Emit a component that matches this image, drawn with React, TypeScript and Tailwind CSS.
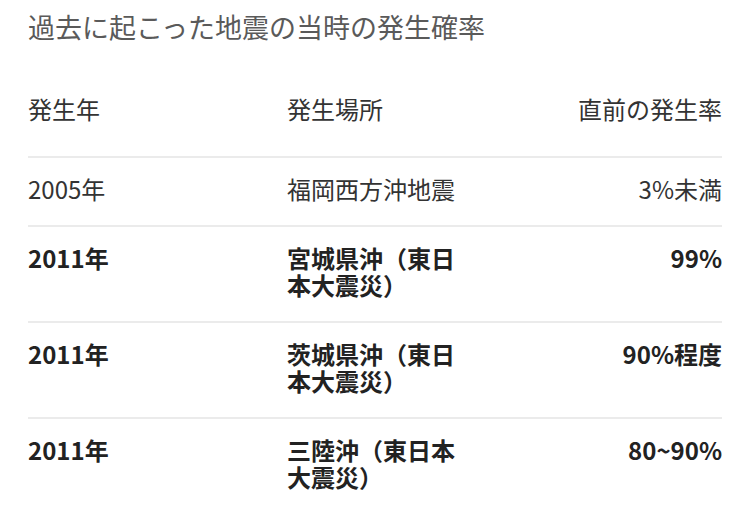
import React from "react";

type Row = { year: string; place: string; rate: string; bold?: boolean };

const rows: Row[] = [
  { year: "2005年", place: "福岡西方沖地震", rate: "3%未満" },
  { year: "2011年", place: "宮城県沖（東日本大震災）", rate: "99%", bold: true },
  { year: "2011年", place: "茨城県沖（東日本大震災）", rate: "90%程度", bold: true },
  { year: "2011年", place: "三陸沖（東日本大震災）", rate: "80~90%", bold: true },
];

const App: React.FC = () => {
  return (
    <div
      className="min-h-[515px] w-[750px] bg-white px-[28px] text-[#333]"
      style={{ fontFamily: '"Noto Sans CJK JP", "Noto Sans", sans-serif' }}
    >
      <h2 className="pt-[9px] text-[27px] leading-[36px] text-[#5a5a5a]">
        過去に起こった地震の当時の発生確率
      </h2>

      <div className="mt-[50px]">
        {/* header */}
        <div className="grid grid-cols-[259px_180px_1fr] border-b-2 border-[#ebebeb] pb-[34px] text-[24px] leading-[27px]">
          <div>発生年</div>
          <div>発生場所</div>
          <div className="text-right">直前の発生率</div>
        </div>

        {rows.map((r, i) => (
          <div
            key={i}
            className={`grid grid-cols-[259px_180px_1fr] pt-[17px] pb-[23px] text-[24px] leading-[27px] ${
              r.bold ? "font-bold text-[#222]" : "text-[#333]"
            } ${i < rows.length - 1 ? "border-b-2 border-[#ebebeb]" : ""}`}
          >
            <div>{r.year}</div>
            <div>{r.place}</div>
            <div className="text-right">{r.rate}</div>
          </div>
        ))}
      </div>
    </div>
  );
};

export default App;
